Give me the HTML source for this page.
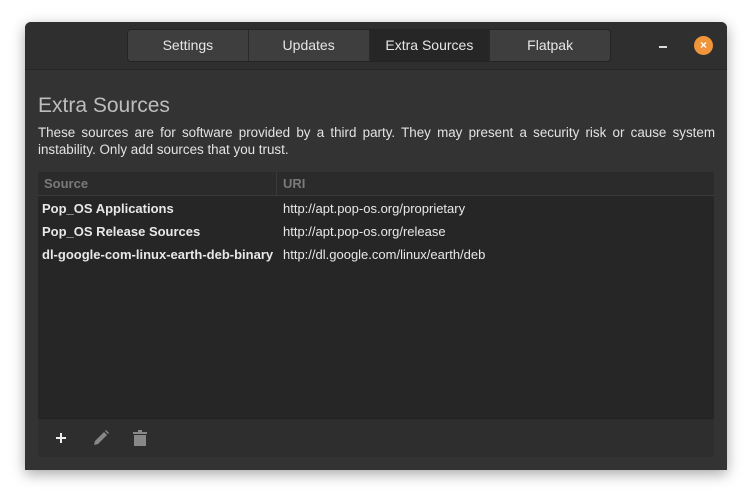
<!DOCTYPE html>
<html><head><style>
*{box-sizing:border-box;margin:0;padding:0}
body{width:752px;height:499px;background:#fff;position:relative;overflow:hidden;font-family:"Liberation Sans","DejaVu Sans",sans-serif}
.win{position:absolute;left:25px;top:22px;width:702px;height:448px;background:#333;border-radius:6px 6px 0 0;box-shadow:0 4px 14px rgba(0,0,0,.35);overflow:hidden}
.hdr{position:absolute;left:0;top:0;width:100%;height:48px;background:#2f2f2f;border-bottom:1px solid #262626}
.tabs{position:absolute;left:102px;top:7px;width:484px;height:33px;display:flex;border:1px solid #242424;border-radius:4px;overflow:hidden}
.tabs div{flex:1;background:#3e3e3e;color:#e6e6e6;font-size:14px;text-align:center;line-height:31px;border-right:1px solid #2a2a2a}
.tabs div:last-child{border-right:none}
.tabs .act{background:#262626}
.min{position:absolute;left:634px;top:24px;width:8px;height:2px;background:#ddd}
.close{position:absolute;left:669px;top:14px;width:19px;height:19px;border-radius:50%;background:#f0953a;color:#fff;font-size:12px;font-weight:bold;text-align:center;line-height:19px}
h1{position:absolute;left:13px;top:72px;font-weight:300;font-size:21px;color:#bdbdbd}
.desc{position:absolute;left:13px;top:102px;width:677px;font-size:13.4px;line-height:17px;color:#e3e3e3;text-align:justify}
.tbl{position:absolute;left:13px;top:150px;width:676px;height:285px;background:#262626}
.th{height:24px;background:#2b2b2b;border-bottom:1px solid #3a3a3a;display:flex;font-size:13px;font-weight:bold;color:#7a7a7a;line-height:23px}
.th div:first-child{width:239px;padding-left:6px;border-right:1px solid #3a3a3a}
.th div:last-child{padding-left:6px}
.row{display:flex;height:23px;line-height:23px;font-size:13px;color:#e8e8e8}
.row div:first-child{width:239px;padding-left:4px;font-weight:bold}
.row div:last-child{padding-left:6px}
.rows{padding-top:1px}
.tb{position:absolute;left:0;top:246px;width:100%;height:39px;background:#2e2e2e;border-top:1px solid #222}
</style></head><body>
<div class="win">
<div class="hdr">
<div class="tabs"><div>Settings</div><div>Updates</div><div class="act">Extra Sources</div><div>Flatpak</div></div>
<div class="min"></div><div class="close">×</div>
</div>
<h1>Extra Sources</h1>
<div class="desc">These sources are for software provided by a third party. They may present a security risk or cause system instability. Only add sources that you trust.</div>
<div class="tbl">
<div class="th"><div>Source</div><div>URI</div></div>
<div class="rows">
<div class="row"><div>Pop_OS Applications</div><div>http://apt.pop-os.org/proprietary</div></div>
<div class="row"><div>Pop_OS Release Sources</div><div>http://apt.pop-os.org/release</div></div>
<div class="row"><div>dl-google-com-linux-earth-deb-binary</div><div>http://dl.google.com/linux/earth/deb</div></div>
</div>
<div class="tb">
<svg style="position:absolute;left:18px;top:14px" width="10" height="10"><path d="M5 0V10M0 5H10" stroke="#eee" stroke-width="2"/></svg>
<svg style="position:absolute;left:55px;top:11px" width="16" height="16"><path d="M1 15L2 11L11 2L14 5L5 14Z" fill="#888"/><path d="M12 1L13 0L16 3L15 4Z" fill="#888"/></svg>
<svg style="position:absolute;left:95px;top:11px" width="14" height="16"><rect x="0" y="2" width="14" height="2" fill="#888"/><rect x="5" y="0" width="4" height="2" fill="#888"/><rect x="1" y="5" width="12" height="11" fill="#888"/></svg>
</div>
</div>
</div>
</body></html>
